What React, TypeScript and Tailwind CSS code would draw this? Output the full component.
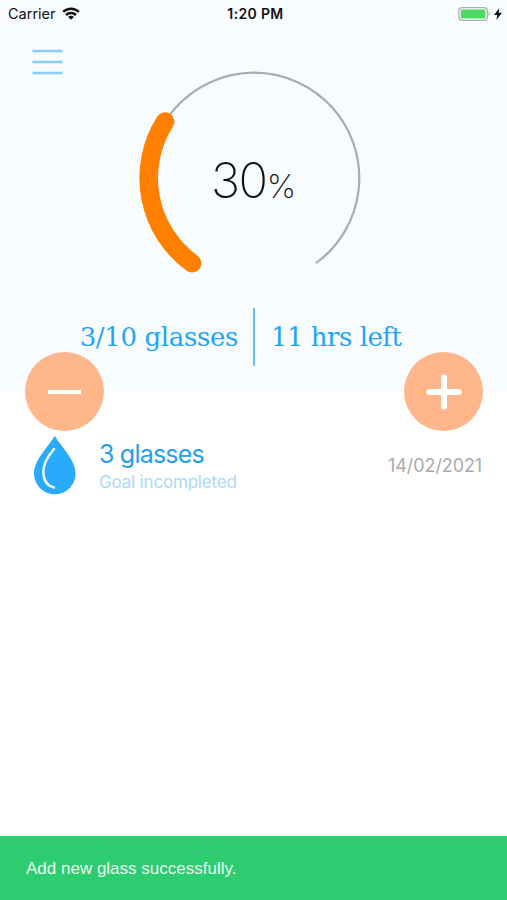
import React from 'react'

const RADIUS = 105.3
const START_ANGLE = 36
const SWEEP = 288

interface ProgressRingProps {
  percent: number
}

interface RoundButtonProps {
  label: string
  children: React.ReactNode
}

interface HistoryItemProps {
  title: string
  subtitle: string
  date: string
}

// angle is measured clockwise from the bottom of the ring
function pointAt(angle: number) {
  const rad = (angle * Math.PI) / 180
  return `${115 - RADIUS * Math.sin(rad)} ${115 + RADIUS * Math.cos(rad)}`
}

function arc(sweep: number) {
  const large = sweep > 180 ? 1 : 0
  return `M${pointAt(START_ANGLE)}A${RADIUS} ${RADIUS} 0 ${large} 1 ${pointAt(START_ANGLE + sweep)}`
}

function StatusBar() {
  return (
    <div className="flex h-7 items-center justify-between pl-2 pr-[5px] text-[#111]">
      <div className="flex w-[120px] items-center gap-[6px]">
        <span className="text-[14.5px] leading-7">Carrier</span>
        <svg className="mb-[2px]" width="18" height="13" viewBox="0 0 18 13" fill="none" stroke="currentColor" strokeWidth="2.5">
          <path d="M1.2 4.8a11.2 11.2 0 0 1 15.6 0" />
          <path d="M4 8a7.2 7.2 0 0 1 10 0" />
          <path d="M9 12.7 6.1 9.9a4 4 0 0 1 5.8 0z" fill="currentColor" stroke="none" />
        </svg>
      </div>
      <span className="pl-px text-[14px] font-semibold leading-7 tracking-[0.35px]">1:20 PM</span>
      <div className="flex w-[120px] items-center justify-end gap-[3px]">
        <svg width="33" height="14" viewBox="0 0 33 14">
          <rect x="0.9" y="0.6" width="28.4" height="12.8" rx="3.4" fill="none" stroke="#a9adb0" strokeWidth="1.2" />
          <rect x="2.8" y="2.5" width="24.6" height="9" rx="1.2" fill="#4cd964" />
          <path d="M30.6 4.8v4.4c1.6-.6 1.6-3.8 0-4.4z" fill="#a9adb0" />
        </svg>
        <svg width="8" height="12" viewBox="0 0 8 12" fill="currentColor">
          <path d="M5.4 0 0 7h3.3L2.4 12 8 4.8H4.6z" />
        </svg>
      </div>
    </div>
  )
}

function ProgressRing({ percent }: ProgressRingProps) {
  return (
    <div className="grid h-[230px] w-[230px] place-items-center">
      <svg className="col-start-1 row-start-1" width="230" height="230" viewBox="0 0 230 230" fill="none">
        <path d={arc(SWEEP)} stroke="#a9acae" strokeWidth="2.2" />
        <path d={arc((SWEEP * percent) / 100)} stroke="#ff8000" strokeWidth="18.6" strokeLinecap="round" />
      </svg>
      <div className="col-start-1 row-start-1 flex items-baseline pr-px pt-[5px] font-[Inter] font-extralight leading-none text-[#111]">
        <span className="text-[49px] tracking-[-1.5px]">{percent}</span>
        <span className="text-[33px]">%</span>
      </div>
    </div>
  )
}

function RoundButton({ label, children }: RoundButtonProps) {
  return (
    <button aria-label={label} className="flex h-[79px] w-[79px] items-center justify-center rounded-full bg-[#ffb68a]">
      {children}
    </button>
  )
}

function HistoryItem({ title, subtitle, date }: HistoryItemProps) {
  return (
    <div className="flex h-[70px] items-center pl-[34px] pr-[25px]">
      <svg className="mb-[2px]" width="42" height="60" viewBox="0 0 42 60" fill="none">
        <path d="M20.800 .8C16 10 0 24.500 0 38.500a20.800 20.800 0 0 0 41.600 0C41.600 24.500 25.600 10 20.800 .8z" fill="#29abfb" />
        <path d="M20 14C13 22.500 9.300 29 9.300 36.500c0 8.500 3.700 14.300 10.700 16" stroke="#f8fcff" strokeWidth="2.400" strokeLinecap="round" />
      </svg>
      <div className="ml-[23px] flex-1 pt-[2px]">
        <div className="text-[25px] leading-[30px] tracking-[-0.8px] text-[#22a0f2]">{title}</div>
        <div className="text-[17px] leading-[26px] tracking-[-0.18px] text-[#a9d9f9]">{subtitle}</div>
      </div>
      <span className="text-[18px] leading-6 tracking-[-0.1px] text-[#aaa]">{date}</span>
    </div>
  )
}

export default function App() {
  return (
    <div className="flex h-[900px] w-[507px] flex-col overflow-hidden bg-white font-[Inter,sans-serif]">
      <header className="h-[391px] shrink-0 bg-[#f8fcff]">
        <StatusBar />
        <div className="flex h-[265px] pl-8">
          <button aria-label="Menu" className="mt-[20px] h-[28px] w-[31px]">
            <svg width="31" height="28" viewBox="0 0 31 28" stroke="#85cef8" strokeWidth="2.4">
              <path d="M.5 3h30M.5 14h30M.5 25h30" />
            </svg>
          </button>
          <div className="ml-[76px] mt-[35px]">
            <ProgressRing percent={30} />
          </div>
        </div>
        <div className="mt-[14px] flex h-[60px] items-center font-['DejaVu_Serif',serif] text-[26px] text-[#22a5f7]">
          <span className="w-[238px] whitespace-nowrap text-right tracking-[-0.35px]">3/10 glasses</span>
          <span className="ml-[15px] mr-[16px] h-[58px] w-[2px] shrink-0 bg-[#66c0f5]" />
          <span className="whitespace-nowrap tracking-[-0.5px]">11 hrs left</span>
        </div>
      </header>

      <div className="-mt-[39px] flex shrink-0 justify-between pl-[25px] pr-[24px]">
        <RoundButton label="Remove glass">
          <span className="h-[4px] w-[33px] bg-white" />
        </RoundButton>
        <RoundButton label="Add glass">
          <svg width="36" height="36" viewBox="0 0 36 36" stroke="#fff" strokeWidth="6" strokeLinecap="round">
            <path d="M18 3.500v29M3.500 18h29" />
          </svg>
        </RoundButton>
      </div>

      <HistoryItem title="3 glasses" subtitle="Goal incompleted" date="14/02/2021" />

      <div className="mt-auto flex h-16 shrink-0 items-center bg-[#2ecc71] pl-[26px] pt-[2px] font-['Liberation_Sans',sans-serif] text-[17px] text-[#e8fbef]">
        Add new glass successfully.
      </div>
    </div>
  )
}
